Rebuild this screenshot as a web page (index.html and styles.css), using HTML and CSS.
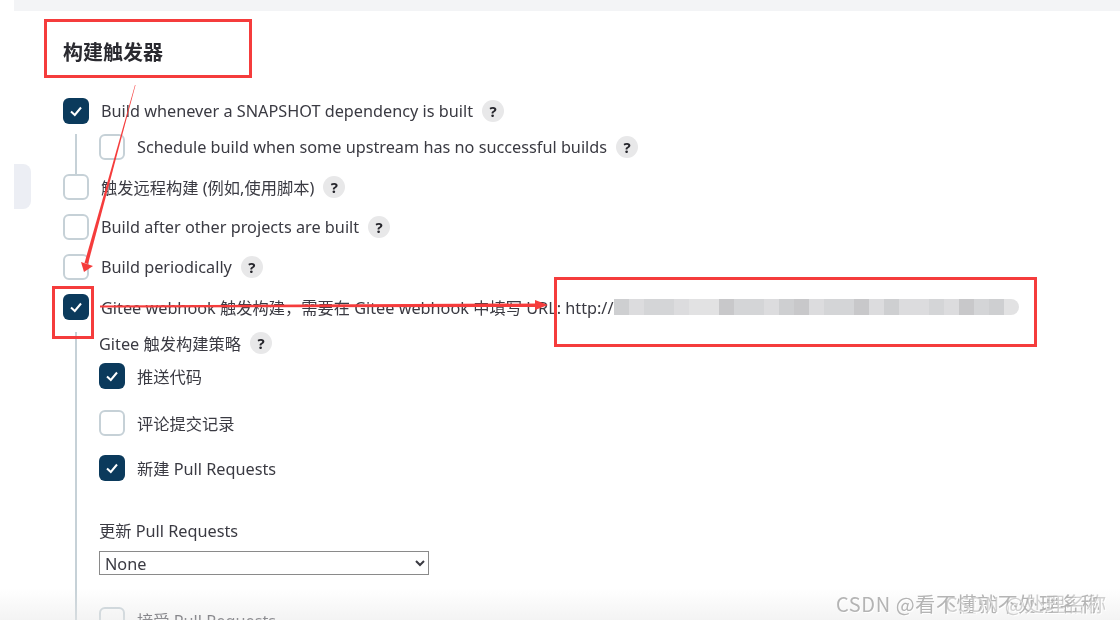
FILE: index.html
```html
<!DOCTYPE html>
<html>
<head>
    <title>构建触发器</title>
    <link rel="stylesheet" href="styles.css">
</head>
<body>
    <div class="page">
        <div class="content">
            <div class="topbar"></div>
            <div class="side-tab"></div>
            <div class="section">
                <h2 class="title">构建触发器</h2>

                <div class="row">
                    <span class="box checked"><svg viewBox="0 0 26 26"><polyline points="8,13.5 11.8,17 18,9.5"/></svg></span>
                    <span class="label up">Build whenever a SNAPSHOT dependency is built</span>
                    <span class="help">?</span>
                </div>
                <div class="nested short">
                    <div class="row">
                        <span class="box"></span>
                        <span class="label up">Schedule build when some upstream has no successful builds</span>
                        <span class="help">?</span>
                    </div>
                </div>
                <div class="row">
                    <span class="box"></span>
                    <span class="label">触发远程构建 (例如,使用脚本)</span>
                    <span class="help">?</span>
                </div>
                <div class="row">
                    <span class="box"></span>
                    <span class="label up">Build after other projects are built</span>
                    <span class="help">?</span>
                </div>
                <div class="row">
                    <span class="box"></span>
                    <span class="label">Build periodically</span>
                    <span class="help">?</span>
                </div>
                <div class="row tight">
                    <span class="box checked"><svg viewBox="0 0 26 26"><polyline points="8,13.5 11.8,17 18,9.5"/></svg></span>
                    <span class="label">Gitee webhook 触发构建，需要在 Gitee webhook 中填写 URL: http://</span>
                    <div class="smudge">
                        <i class="s2"></i><i class="s4"></i><i class="s3"></i><i class="s3"></i><i class="s4"></i><i class="s5"></i><i class="s5"></i><i class="s1"></i><i class="s3"></i><i class="s3"></i><i class="s4"></i><i class="s2"></i><i class="s1"></i><i class="s4"></i><i class="s3"></i><i class="s3"></i><i class="s1"></i><i class="s4"></i><i class="s2"></i><i class="s4"></i><i class="s4"></i><i class="s3"></i><i class="s4"></i><i class="s1"></i><i class="s3"></i><i class="s2"></i><i class="s5 end"></i>
                    </div>
                </div>
                <div class="nested long">
                    <div class="row strategy">
                        <span class="label">Gitee 触发构建策略</span>
                        <span class="help">?</span>
                    </div>
                    <div class="row push">
                        <span class="box checked"><svg viewBox="0 0 26 26"><polyline points="8,13.5 11.8,17 18,9.5"/></svg></span>
                        <span class="label">推送代码</span>
                    </div>
                    <div class="row comment">
                        <span class="box"></span>
                        <span class="label">评论提交记录</span>
                    </div>
                    <div class="row newpr">
                        <span class="box checked"><svg viewBox="0 0 26 26"><polyline points="8,13.5 11.8,17 18,9.5"/></svg></span>
                        <span class="label">新建 Pull Requests</span>
                    </div>
                    <div class="field-label">更新 Pull Requests</div>
                    <select class="field-select">
                        <option>None</option>
                    </select>
                    <div class="row accept">
                        <span class="box"></span>
                        <span class="label">接受 Pull Requests</span>
                    </div>
                </div>
            </div>
            <div class="fade"></div>
        </div>

        <!-- annotations drawn over the screenshot -->
        <div class="mark mark-title"></div>
        <div class="mark mark-check"></div>
        <div class="mark mark-url"></div>
        <svg class="arrows" viewBox="0 0 1120 624">
            <polygon points="135,85 135.5,85 88,264 84.5,263"/>
            <polygon points="81,262 93,266 84,272"/>
            <polygon points="100,305.5 100,307.5 538,307 538,303.5"/>
            <polygon points="535,300 548,305 535,310"/>
        </svg>
        <div class="watermark">CSDN @看不懂就不处理名称</div>
        <div class="watermark ghost">CSDN @处理名称</div>
    </div>
</body>
</html>
```

FILE: styles.css
```css
body {
    margin: 0;
    background-color: white;
    color: #3a3a42;
    font-family: "Noto Sans", "Noto Sans CJK SC", sans-serif;
    font-size: 16.25px;
}

.page {
    position: relative;
    width: 1120px;
    height: 624px;
    overflow: hidden;
    filter: blur(0.4px);
}

.content {
    position: relative;
    height: 620px;
    overflow: hidden;
}

.topbar {
    height: 11px;
    margin-left: 14px;
    background-color: #f3f4f6;
}

.side-tab {
    position: absolute;
    left: 14px;
    top: 164px;
    width: 17px;
    height: 45px;
    background-color: #eceef4;
    border-radius: 0 8px 8px 0;
}

.section {
    padding-left: 63px;
}

.title {
    margin: 0;
    height: 87px;
    line-height: 84px;
    font-size: 20px;
    font-weight: 700;
    color: #2a2a30;
}

.row {
    display: flex;
    align-items: center;
    height: 26px;
    margin-bottom: 14px;
    white-space: nowrap;
}

.row.tight {
    margin-bottom: 0;
}

.box {
    flex: none;
    box-sizing: border-box;
    width: 26px;
    height: 26px;
    margin-right: 12px;
    border: 2px solid #c6d1d7;
    border-radius: 6px;
    background-color: white;
}

.box.checked {
    border: none;
    background-color: #0b3a5c;
}

.box svg {
    display: block;
    width: 26px;
    height: 26px;
}

.box polyline {
    fill: none;
    stroke: white;
    stroke-width: 2;
}

.label.up {
    padding-bottom: 1px;
}

.help {
    flex: none;
    width: 22px;
    height: 22px;
    margin-left: 9px;
    border-radius: 50%;
    background-color: #e8e8e9;
    color: #26262c;
    font-size: 15px;
    font-weight: 700;
    line-height: 22px;
    text-align: center;
}

.nested {
    display: flow-root;
    margin-left: 12px;
    padding-left: 22px;
    border-left: 2px solid #c6d1d7;
}

.nested.short {
    margin-top: -4px;
}

.nested.long {
    margin-top: 12px;
}

.smudge {
    display: flex;
    height: 16px;
    margin-left: 1px;
}

.smudge i {
    width: 15px;
}

.smudge .s1 { background-color: #c8c8ca; }
.smudge .s2 { background-color: #cecfd1; }
.smudge .s3 { background-color: #d4d5d7; }
.smudge .s4 { background-color: #dcdcde; }
.smudge .s5 { background-color: #e2e2e3; }

.smudge .end {
    border-radius: 0 8px 8px 0;
}

.row.strategy {
    margin-top: -2px;
    margin-bottom: 7px;
}

.row.push {
    margin-bottom: 21px;
}

.row.comment {
    margin-bottom: 19px;
}

.row.newpr {
    margin-bottom: 38px;
}

.field-label {
    height: 24px;
    line-height: 24px;
    margin-bottom: 8px;
}

.field-select {
    display: block;
    box-sizing: border-box;
    width: 330px;
    height: 24px;
    padding: 0 0 0 1px;
    border: 1px solid #8a8a8a;
    border-radius: 0;
    background-color: white;
    color: #3a3a42;
    font-family: inherit;
    font-size: 16.25px;
}

.row.accept {
    margin-top: 32px;
}

.fade {
    position: absolute;
    left: 0;
    right: 0;
    bottom: 0;
    height: 32px;
    background: linear-gradient(rgba(232, 232, 232, 0), rgba(232, 232, 232, 0.5));
}

.mark {
    position: absolute;
    box-sizing: border-box;
    border: 3px solid #f53c3c;
}

.mark-title {
    left: 44px;
    top: 19px;
    width: 208px;
    height: 59px;
}

.mark-check {
    left: 52px;
    top: 286px;
    width: 42px;
    height: 53px;
}

.mark-url {
    left: 554px;
    top: 277px;
    width: 483px;
    height: 70px;
}

.arrows {
    position: absolute;
    left: 0;
    top: 0;
    width: 1120px;
    height: 624px;
}

.arrows polygon {
    fill: #f53c3c;
}

.watermark {
    position: absolute;
    left: 836px;
    top: 590px;
    font-family: "Noto Sans CJK SC", sans-serif;
    font-size: 20px;
    line-height: 28px;
    letter-spacing: 0.6px;
    white-space: nowrap;
    color: #b4b4b4;
    text-shadow: 1px 1px 0 rgba(255, 255, 255, 0.9);
}

.watermark.ghost {
    left: 945px;
    color: rgba(180, 180, 180, 0.6);
}
```
